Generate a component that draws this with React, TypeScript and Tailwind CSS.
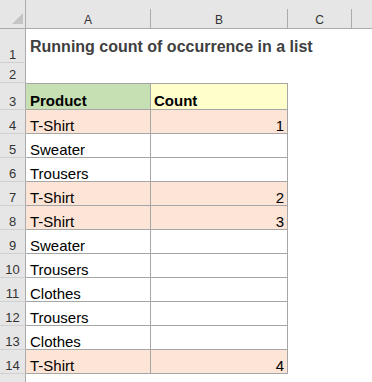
const rows: { n: number; product: string; count?: number; hi?: boolean }[] = [
  { n: 4, product: 'T-Shirt', count: 1, hi: true },
  { n: 5, product: 'Sweater' },
  { n: 6, product: 'Trousers' },
  { n: 7, product: 'T-Shirt', count: 2, hi: true },
  { n: 8, product: 'T-Shirt', count: 3, hi: true },
  { n: 9, product: 'Sweater' },
  { n: 10, product: 'Trousers' },
  { n: 11, product: 'Clothes' },
  { n: 12, product: 'Trousers' },
  { n: 13, product: 'Clothes' },
  { n: 14, product: 'T-Shirt', count: 4, hi: true },
];

function RowNum({ n, h }: { n?: number; h: string }) {
  return (
    <div
      className={`${h} w-[26px] shrink-0 flex items-end justify-center pb-[1px] leading-none bg-[#e6e6e6] border-r border-b border-r-[#ababab] border-b-[#d0d0d0] text-[13px] text-[#333]`}
    >
      {n}
    </div>
  );
}

function ColHead({ label, w }: { label?: string; w: string }) {
  return (
    <div className={`${w} shrink-0 flex`}>
      <div className="flex-1 flex items-end justify-center pb-[2px] leading-none">{label}</div>
      <div className="w-px h-[19px] self-end bg-[#ababab]" />
    </div>
  );
}

export default function App() {
  return (
    <div className="w-[372px] h-[382px] overflow-hidden bg-white font-['Liberation_Sans',Arial,sans-serif]">
      {/* column headers */}
      <div className="flex h-[29px] bg-[#e6e6e6] border-b border-[#ababab] text-[12px] text-[#333]">
        <div className="w-[26px] shrink-0 relative border-r border-[#ababab]">
          <div className="absolute right-[2px] bottom-[4px] w-0 h-0 border-l-[11px] border-l-transparent border-b-[11px] border-b-[#c4c4c4]" />
        </div>
        <ColHead label="A" w="w-[125px]" />
        <ColHead label="B" w="w-[137px]" />
        <ColHead label="C" w="w-[64px]" />
        <div className="flex-1" />
      </div>

      {/* row 1 title */}
      <div className="flex">
        <RowNum n={1} h="h-[34px]" />
        <div className="flex-1 flex items-end pl-[4px] pb-[4px] text-[16px] font-bold text-[#404040] whitespace-nowrap">
          Running count of occurrence in a list
        </div>
      </div>

      {/* row 2 */}
      <div className="flex">
        <RowNum n={2} h="h-[20px]" />
        <div className="flex-1" />
      </div>

      {/* row 3 headers */}
      <div className="flex">
        <RowNum n={3} h="h-[27px]" />
        <div className="w-[125px] shrink-0 h-[27px] bg-[#c6e0b4] border-t border-r border-b border-[#a6a6a6] flex items-end pl-[4px] pb-[1px] leading-none text-[15px] font-bold text-black">
          Product
        </div>
        <div className="w-[137px] shrink-0 h-[27px] bg-[#ffffcc] border-t border-r border-b border-[#a6a6a6] flex items-end pl-[3px] pb-[1px] leading-none text-[15px] font-bold text-black">
          Count
        </div>
        <div className="flex-1" />
      </div>

      {rows.map((r) => (
        <div key={r.n} className="flex">
          <RowNum n={r.n} h="h-[24px]" />
          <div
            className={`w-[125px] shrink-0 h-[24px] border-r border-b border-[#a6a6a6] flex items-end pl-[4px] leading-none text-[15px] text-black ${
              r.hi ? 'bg-[#fce4d6]' : 'bg-white'
            }`}
          >
            {r.product}
          </div>
          <div
            className={`w-[137px] shrink-0 h-[24px] border-r border-b border-[#a6a6a6] flex items-end justify-end pr-[3px] leading-none text-[15px] text-black ${
              r.hi ? 'bg-[#fce4d6]' : 'bg-white'
            }`}
          >
            {r.count}
          </div>
          <div className="flex-1" />
        </div>
      ))}

      <div className="flex">
        <RowNum n={15} h="h-[24px]" />
        <div className="flex-1" />
      </div>
    </div>
  );
}
